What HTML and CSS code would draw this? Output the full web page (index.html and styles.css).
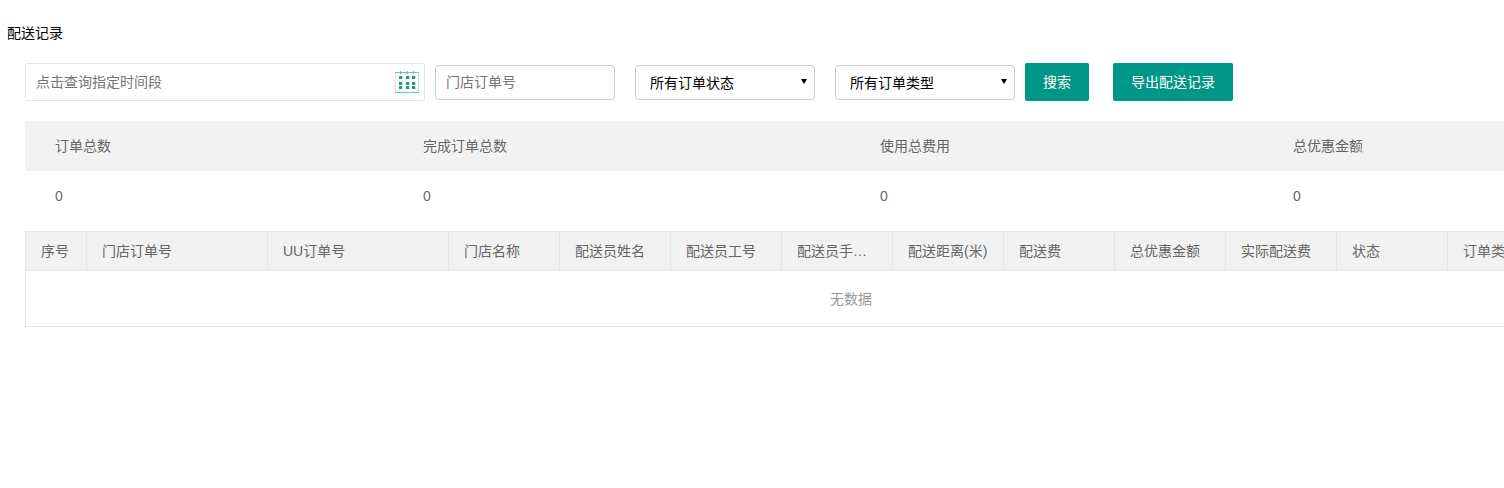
FILE: index.html
```html
<!DOCTYPE html>
<html lang="zh-CN">
<head>
<meta charset="utf-8">
<title>配送记录</title>
<link rel="stylesheet" href="styles.css">
</head>
<body>
<div class="page">
  <h1 class="title">配送记录</h1>
  <div class="content">
    <form class="filters">
      <div class="date-field">
        <input class="date-input" type="text" placeholder="点击查询指定时间段">
        <svg class="cal" width="25" height="23" viewBox="0 0 25 23" aria-hidden="true">
          <path d="M.5 1.5v20" stroke="#fbd3ae" fill="none"/>
          <path d="M23.5 1.5v20" stroke="#a9e2f0" fill="none"/>
          <path d="M0 1.5h24M0 21.5h24" stroke="#7cc0b4" fill="none"/>
          <path d="M5.5 0v3M12 0v3M18.5 0v3" stroke="#5aae9f" fill="none"/>
          <path d="M4 5h3v3H4zM11 5h3v3h-3zM17 5h3v3h-3zM4 11h3v3H4zM11 11h3v3h-3zM17 11h3v3h-3zM4 15h3v3H4zM11 15h3v3h-3zM17 15h3v3h-3z" fill="#0f9f8e"/>
          <path d="M7 5h1v3H7zM14 5h1v3h-1zM20 5h1v3h-1zM7 11h1v3H7zM14 11h1v3h-1zM20 11h1v3h-1zM7 15h1v3H7zM14 15h1v3h-1zM20 15h1v3h-1z" fill="#f8cfa8"/>
        </svg>
      </div>
      <input class="order-input" type="text" placeholder="门店订单号">
      <label class="select-wrap">
        <select class="select"><option>所有订单状态</option></select>
      </label>
      <label class="select-wrap">
        <select class="select"><option>所有订单类型</option></select>
      </label>
      <button class="btn search" type="button">搜索</button>
      <button class="btn export" type="button">导出配送记录</button>
    </form>

    <div class="summary">
      <div class="sum-head">
        <div>订单总数</div>
        <div>完成订单总数</div>
        <div>使用总费用</div>
        <div>总优惠金额</div>
      </div>
      <div class="sum-row">
        <div>0</div>
        <div>0</div>
        <div>0</div>
        <div>0</div>
      </div>
    </div>

    <div class="table">
      <div class="thead">
        <div class="th">序号</div>
        <div class="th">门店订单号</div>
        <div class="th">UU订单号</div>
        <div class="th">门店名称</div>
        <div class="th">配送员姓名</div>
        <div class="th">配送员工号</div>
        <div class="th"><span class="clip">配送员手机号</span></div>
        <div class="th">配送距离(米)</div>
        <div class="th">配送费</div>
        <div class="th">总优惠金额</div>
        <div class="th">实际配送费</div>
        <div class="th">状态</div>
        <div class="th">订单类型</div>
      </div>
      <div class="empty">无数据</div>
    </div>
  </div>
</div>
</body>
</html>
```
FILE: styles.css
```css
* { box-sizing: border-box; }
html, body { margin: 0; padding: 0; height: 100%; overflow: hidden; background: #fff; }
body { font-family: "Liberation Sans", "Noto Sans CJK SC", sans-serif; font-size: 14px; color: #666; }
.page { width: 1700px; padding-top: 23px; }
.title { margin: 0 0 0 7px; font-size: 14px; font-weight: 400; line-height: 20px; color: #000; }
.content { margin: 20px 0 0 25px; width: 1652px; }

.filters { display: flex; align-items: center; height: 38px; margin: 0; }
.date-field { position: relative; width: 400px; height: 38px; }
.date-input { width: 100%; height: 100%; padding: 0 40px 0 10px; border: 1px solid #e6e6e6; border-radius: 2px; background: #fff; font: inherit; outline: 0; }
.cal { position: absolute; right: 5px; top: 8px; }
.order-input { width: 180px; height: 35px; margin-left: 10px; padding: 0 10px; border: 1px solid #ccc; border-radius: 4px; font: inherit; outline: 0; }
input::placeholder { color: #757575; opacity: 1; }
.select-wrap { position: relative; display: block; width: 180px; height: 35px; margin-left: 20px; }
.select-wrap::after { content: ""; position: absolute; right: 8px; top: 14px; border-style: solid; border-width: 5px 3.5px 0; border-color: #000 transparent transparent; pointer-events: none; }
.select { display: block; width: 100%; height: 100%; padding: 2px 24px 0 14px; appearance: none; -webkit-appearance: none; border: 1px solid #ccc; border-radius: 4px; background-color: #fff; font: inherit; color: #000; }
.btn { height: 38px; margin: 0; border: 0; border-radius: 2px; background: #009688; color: #fff; font: inherit; padding: 0 0 2px; }
.search { width: 64px; margin-left: 10px; }
.export { width: 120px; margin-left: 24px; }

.summary { margin-top: 20px; }
.sum-head, .sum-row { display: grid; grid-template-columns: 368px 457px 413px 414px; align-items: center; }
.sum-head { height: 50px; background: #f2f2f2; padding-bottom: 2px; }
.sum-row { height: 50px; }
.sum-head > div, .sum-row > div { padding-left: 30px; }

.table { margin-top: 10px; border: 1px solid #e6e6e6; }
.thead { display: grid; grid-template-columns: 61px 181px 181px repeat(10, 111px); height: 39px; background: #f2f2f2; border-bottom: 1px solid #e6e6e6; }
.th { display: flex; align-items: center; padding: 0 0 2px 15px; border-right: 1px solid #e6e6e6; white-space: nowrap; overflow: hidden; }
.clip { display: block; width: 80px; overflow: hidden; text-overflow: ellipsis; }
.empty { height: 55px; padding-top: 1px; line-height: 55px; text-align: center; color: #999; }
```
